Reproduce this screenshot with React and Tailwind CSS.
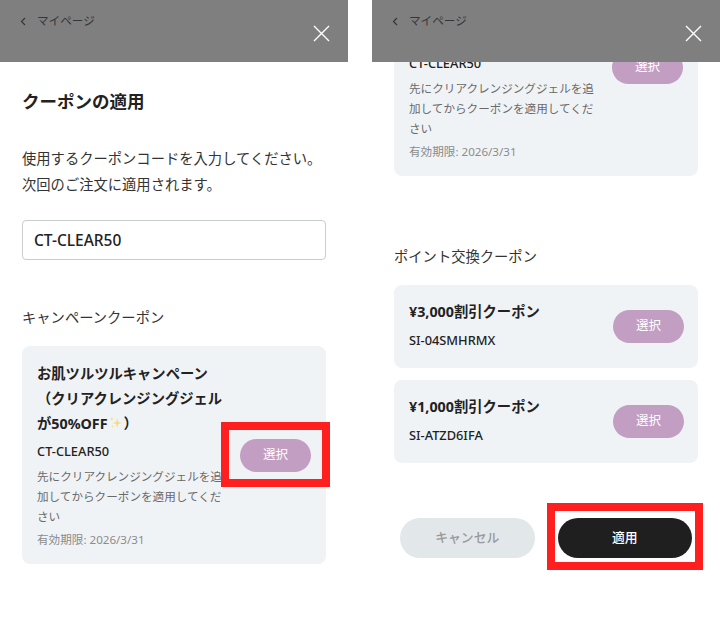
import React from "react";

const Sparkles = () => (
  <svg width="14" height="14" viewBox="0 0 24 24" className="inline-block align-[-1px] mx-[1px]">
    <path d="M14 4 L15.8 10.2 L22 12 L15.8 13.8 L14 20 L12.2 13.8 L6 12 L12.2 10.2 Z" fill="#f6dc7a" />
    <path d="M5 2 L5.9 4.1 L8 5 L5.9 5.9 L5 8 L4.1 5.9 L2 5 L4.1 4.1 Z" fill="#f6dc7a" />
    <path d="M6 16 L6.7 17.3 L8 18 L6.7 18.7 L6 20 L5.3 18.7 L4 18 L5.3 17.3 Z" fill="#f6dc7a" />
  </svg>
);

const SelectButton = ({ highlight }) => (
  <div className="relative shrink-0">
    <button className="w-[71px] h-[33px] rounded-full bg-[#c29ec2] text-white text-[12.5px] leading-none">
      選択
    </button>
    {/* 注釈の赤枠 */}
    {highlight && (
      <div className="absolute -left-[19px] -top-[17px] w-[109px] h-[65px] border-[8px] border-[#ff1f1f]" />
    )}
  </div>
);

const PointCoupon = ({ title, code, className }) => (
  <div className={`flex items-center rounded-[8px] bg-[#f0f3f6] pl-[15px] pr-[14px] pt-[15px] pb-[16px] ${className}`}>
    <div className="flex-1">
      <p className="text-[14.3px] font-bold leading-[24px] text-[#222]">{title}</p>
      <p className="mt-[4px] text-[12.8px] font-medium leading-[24px] text-[#222]">{code}</p>
    </div>
    <SelectButton />
  </div>
);

const Sheet = ({ scroll, highlightSelect, highlightApply }) => (
  <div className="w-[348px] h-[619px] flex flex-col bg-white">
    {/* 背面のページ（暗くなっている） */}
    <div className="h-[62px] shrink-0 bg-[#7f7f7f] flex justify-between">
      <div className="mt-[14px] ml-[20px] h-[14px] flex items-center gap-[11px] text-[11.6px] text-[#363636]">
        <svg width="6" height="9" viewBox="0 0 6 9">
          <path d="M5 1L1.5 4.5L5 8" stroke="#363636" strokeWidth="1.2" fill="none" />
        </svg>
        <span>マイページ</span>
      </div>
      <svg className="mt-[25px] mr-[18px]" width="17" height="17" viewBox="0 0 17 17">
        <path d="M1 1L16 16M16 1L1 16" stroke="white" strokeWidth="1.4" />
      </svg>
    </div>

    <div
      className="flex-1 overflow-hidden"
      ref={(el) => {
        if (el) el.scrollTop = scroll;
      }}
    >
      <div className="px-[22px] pt-[26px] pb-[80px]">
        <h2 className="text-[17.5px] font-bold leading-[26px] text-[#222]">クーポンの適用</h2>
        <p className="mt-[32px] text-[14.3px] leading-[26px] text-[#333]">
          使用するクーポンコードを入力してください。
          <br />
          次回のご注文に適用されます。
        </p>
        <input
          readOnly
          value="CT-CLEAR50"
          className="mt-[22px] block w-full h-[40px] rounded-[4px] border border-[#c9cdd0] px-[11px] text-[15.5px] font-medium text-[#222] outline-none"
        />

        <p className="mt-[48px] text-[14.3px] leading-[20px] text-[#333]">キャンペーンクーポン</p>
        <div className="mt-[18px] flex items-center rounded-[8px] bg-[#f0f3f6] px-[15px] pt-[15px] pb-[14px]">
          <div className="flex-1">
            <p className="text-[14.3px] font-bold leading-[25px] text-[#222] whitespace-nowrap">
              お肌ツルツルキャンペーン
              <br />
              （クリアクレンジングジェル
              <br />
              が50%OFF
              <Sparkles />）
            </p>
            <p className="mt-[3px] text-[12.8px] font-medium leading-[24px] text-[#222]">CT-CLEAR50</p>
            <p className="mt-[4px] text-[11.6px] leading-[20px] text-[#6a6a6a] whitespace-nowrap">
              先にクリアクレンジングジェルを追
              <br />
              加してからクーポンを適用してくだ
              <br />
              さい
            </p>
            <p className="mt-[3px] text-[11.6px] leading-[20px] text-[#8c8c8c]">有効期限: 2026/3/31</p>
          </div>
          <SelectButton highlight={highlightSelect} />
        </div>

        <p className="mt-[71px] text-[14.3px] leading-[20px] text-[#333]">ポイント交換クーポン</p>
        <PointCoupon className="mt-[18px]" title="¥3,000割引クーポン" code="SI-04SMHRMX" />
        <PointCoupon className="mt-[12px]" title="¥1,000割引クーポン" code="SI-ATZD6IFA" />

        <div className="mt-[55px] flex gap-[23px] px-[6px]">
          <button className="flex-1 h-[40px] rounded-full bg-[#e2e7ea] text-[12.8px] font-medium text-[#9a9a9a]">
            キャンセル
          </button>
          <div className="relative flex-1">
            <button className="w-full h-[40px] rounded-full bg-[#1f1f1f] text-[12.8px] font-medium text-white">
              適用
            </button>
            {highlightApply && (
              <div className="absolute -left-[11px] -right-[11px] -top-[15px] -bottom-[12px] border-[8px] border-[#ff1f1f]" />
            )}
          </div>
        </div>
      </div>
    </div>
  </div>
);

export default function App() {
  return (
    <div className="w-[720px] h-[619px] flex gap-[24px] bg-white font-['Noto_Sans','Noto_Sans_CJK_JP',sans-serif]">
      <Sheet scroll={0} highlightSelect />
      <Sheet scroll={388} highlightApply />
    </div>
  );
}
